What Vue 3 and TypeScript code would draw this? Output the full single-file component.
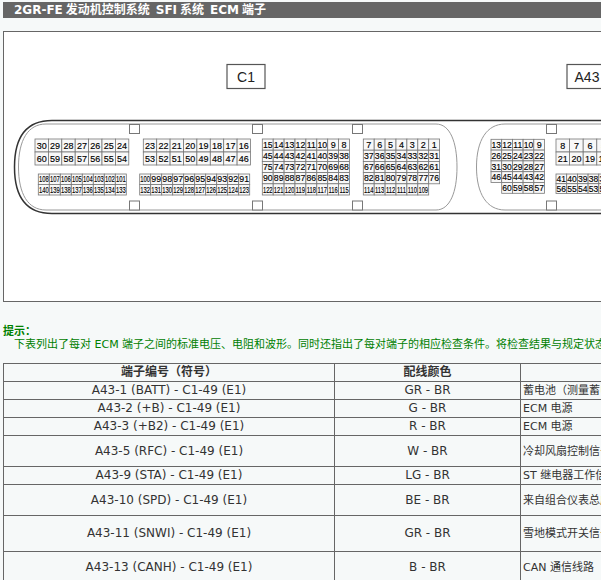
<script setup lang="ts">
interface Block {
  x: number
  y: number
  w: number
  h: number
  size: number
  rows: (number | null)[][]
}

// descending run of pin numbers, from..to
const run = (from: number, to: number) => {
  const out: number[] = []
  for (let n = from; n >= to; n--) out.push(n)
  return out
}

const blocks: Block[] = [
  { x: 35, y: 139, w: 13.4, h: 13, size: 9, rows: [run(30, 24), run(60, 54)] },
  { x: 143.3, y: 139, w: 13.4, h: 13, size: 9, rows: [run(23, 16), run(53, 46)] },
  { x: 38.3, y: 174, w: 11, h: 10.5, size: 9, rows: [run(108, 101), run(140, 133)] },
  { x: 139.7, y: 174, w: 11, h: 10.5, size: 9, rows: [run(100, 91), run(132, 123)] },
  {
    x: 262.3, y: 139, w: 10.9, h: 11.2, size: 9,
    rows: [run(15, 8), run(45, 38), run(75, 68), run(90, 83), run(122, 115)],
  },
  {
    x: 363.3, y: 139, w: 10.9, h: 11.2, size: 9,
    rows: [run(7, 1), run(37, 31), run(67, 61), run(82, 76), run(114, 109)],
  },
  {
    x: 491, y: 139.3, w: 10.7, h: 10.8, size: 9,
    rows: [run(13, 9), run(26, 22), run(31, 27), run(46, 42), [null, ...run(60, 57)]],
  },
  { x: 556, y: 139, w: 13.6, h: 13, size: 9, rows: [run(8, 1), run(21, 14)] },
  { x: 556, y: 174, w: 10.7, h: 9.7, size: 9, rows: [run(41, 34), run(56, 49)] },
]

const notches = [129, 252, 352, 546]

// place a pin number in its cell, squeezed sideways when it would not fit
const pinTransform = (pin: number, b: Block, r: number, c: number) => {
  const x = b.x + (c + 0.5) * b.w
  const y = b.y + (r + 0.5) * b.h + b.size * 0.36
  const natural = String(pin).length * b.size * 0.556
  const sx = Math.min(1, (b.w - 1.2) / natural)
  return `translate(${x} ${y}) scale(${sx} 1)`
}

const rows = [
  { pin: 'A43-1 (BATT) - C1-49 (E1)', wire: 'GR - BR', desc: '蓄电池（测量蓄电池电压和 ECM 存储器）', h: 18 },
  { pin: 'A43-2 (+B) - C1-49 (E1)', wire: 'G - BR', desc: 'ECM 电源', h: 18 },
  { pin: 'A43-3 (+B2) - C1-49 (E1)', wire: 'R - BR', desc: 'ECM 电源', h: 18 },
  { pin: 'A43-5 (RFC) - C1-49 (E1)', wire: 'W - BR', desc: '冷却风扇控制信号', h: 31 },
  { pin: 'A43-9 (STA) - C1-49 (E1)', wire: 'LG - BR', desc: 'ST 继电器工作信号', h: 18 },
  { pin: 'A43-10 (SPD) - C1-49 (E1)', wire: 'BE - BR', desc: '来自组合仪表总成的车速信号', h: 31 },
  { pin: 'A43-11 (SNWI) - C1-49 (E1)', wire: 'GR - BR', desc: '雪地模式开关信号', h: 36 },
  { pin: 'A43-13 (CANH) - C1-49 (E1)', wire: 'B - BR', desc: 'CAN 通信线路', h: 32 },
]
</script>

<template>
  <div class="page">
    <h1 class="title">2GR-FE 发动机控制系统&nbsp; SFI 系统&nbsp; ECM 端子</h1>

    <div class="figure">
      <svg class="diagram" viewBox="4 32 996 269" width="996" height="269">
        <g class="label">
          <rect x="227" y="64.5" width="38" height="24" />
          <text x="246" y="82">C1</text>
          <rect x="567" y="64.5" width="40" height="24" />
          <text x="587" y="82">A43</text>
        </g>

        <path class="outer"
          d="M1000 120.5H52C26 120.5 14.5 137 14.5 167S26 213.5 52 213.5H1000" />
        <path class="inner"
          d="M436 124H46C28 124 18.5 140 18.5 167S28 210 46 210H436C450 210 457 192 457 167S450 124 436 124Z" />
        <path class="inner"
          d="M1000 124H505C487 124 476.500 140 476.500 167S487 210 505 210H1000" />

        <g v-for="x in notches" :key="x" class="notch">
          <rect :x="x + 0.5" y="124.500" width="10" height="9" />
          <rect :x="x + 0.5" y="201" width="10" height="9" />
        </g>

        <g v-for="(b, i) in blocks" :key="i">
          <template v-for="(row, r) in b.rows" :key="r">
            <template v-for="(pin, c) in row" :key="c">
              <g v-if="pin !== null">
                <rect class="cell" :x="b.x + c * b.w" :y="b.y + r * b.h" :width="b.w" :height="b.h" />
                <text class="pin" :transform="pinTransform(pin, b, r, c)" :font-size="b.size">{{ pin }}</text>
              </g>
            </template>
          </template>
        </g>
      </svg>
    </div>

    <div class="hint">
      <p class="hint-head">提示：</p>
      <p class="hint-text">下表列出了每对 ECM 端子之间的标准电压、电阻和波形。同时还指出了每对端子的相应检查条件。将检查结果与规定状态进行比较。</p>
    </div>

    <table class="pins">
      <colgroup>
        <col class="col-pin" />
        <col class="col-wire" />
        <col />
      </colgroup>
      <thead>
        <tr>
          <th>端子编号（符号）</th>
          <th>配线颜色</th>
          <th>端子说明</th>
        </tr>
      </thead>
      <tbody>
        <tr v-for="row in rows" :key="row.pin" :style="{ height: row.h + 'px' }">
          <td class="mid">{{ row.pin }}</td>
          <td class="mid">{{ row.wire }}</td>
          <td class="desc">{{ row.desc }}</td>
        </tr>
      </tbody>
    </table>
  </div>
</template>

<style>
html,
body {
  overflow: hidden;
  background: #f6f9f9;
}
</style>

<style scoped>
.page {
  width: 1000px;
  padding: 2px 0 0 3px;
  font-family: "DejaVu Sans", "Noto Sans CJK SC", sans-serif;
  font-size: 12px;
  color: #333;
}

.title {
  height: 16px;
  margin: 0 0 13px;
  padding-left: 11px;
  background: #666;
  color: #fff;
  font-size: 12px;
  font-weight: bold;
  line-height: 16px;
  word-spacing: -1.2px;
}

.figure {
  height: 269px;
  border: 1px solid #666;
  background: #fff;
}

.diagram {
  display: block;
}

.label rect {
  fill: #fff;
  stroke: #555;
  stroke-width: 1.2;
}

.label text {
  fill: #222;
  font-family: "Liberation Sans", sans-serif;
  font-size: 14px;
  text-anchor: middle;
}

.outer {
  fill: none;
  stroke: #333;
  stroke-width: 1.5;
}

.inner {
  fill: none;
  stroke: #999;
  stroke-width: 1;
}

.notch rect {
  fill: #fff;
  stroke: #777;
  stroke-width: 1;
}

.cell {
  fill: #f8f8f8;
  stroke: #777;
  stroke-width: 0.8;
}

.pin {
  fill: #000;
  stroke: #000;
  stroke-width: 0.15;
  font-family: "Liberation Sans", sans-serif;
  text-anchor: middle;
}

.hint {
  margin-top: 23px;
  color: #008000;
  font-size: 11px;
  line-height: 13px;
}

.hint p {
  margin: 0;
  white-space: nowrap;
}

.hint-head {
  font-weight: bold;
}

.hint-text {
  padding-left: 11px;
}

.pins {
  width: 997px;
  margin-top: 12px;
  border-collapse: collapse;
  table-layout: fixed;
}

.col-pin {
  width: 331px;
}

.col-wire {
  width: 186px;
}

.pins th,
.pins td {
  padding: 0 2px;
  border: 1px solid #666;
  font-size: 12px;
  line-height: 15px;
  white-space: nowrap;
  overflow: hidden;
}

.pins th {
  height: 17px;
  text-align: center;
  font-weight: bold;
}

.pins .mid {
  text-align: center;
}

.pins .desc {
  font-size: 11px;
}
</style>
